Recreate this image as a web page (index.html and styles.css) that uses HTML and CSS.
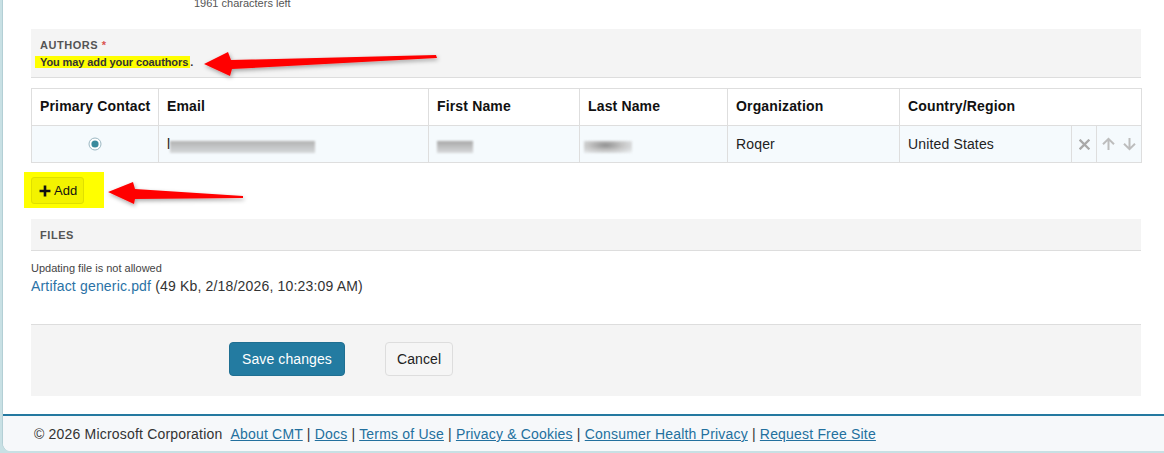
FILE: index.html
```html
<!DOCTYPE html>
<html lang="en">
<head>
<meta charset="utf-8">
<title>Edit Submission</title>
<link rel="stylesheet" href="styles.css">
</head>
<body>
<div class="page">
  <div class="content">
    <div class="chars-left">1961 characters left</div>

    <section class="authors">
      <div class="section-head">
        <div class="section-title">AUTHORS <span class="req">*</span></div>
        <div class="hint"><mark>You may add your coauthors</mark>.</div>
      </div>

      <table class="authors-table">
        <colgroup>
          <col class="c-primary"><col class="c-email"><col class="c-first"><col class="c-last">
          <col class="c-org"><col class="c-country"><col class="c-del"><col class="c-move">
        </colgroup>
        <thead>
          <tr>
            <th>Primary Contact</th>
            <th>Email</th>
            <th>First Name</th>
            <th>Last Name</th>
            <th>Organization</th>
            <th colspan="3">Country/Region</th>
          </tr>
        </thead>
        <tbody>
          <tr>
            <td class="center">
              <svg class="radio" width="14" height="14" viewBox="0 0 14 14"><circle cx="7" cy="7" r="6" fill="#fff" stroke="#9bb7c2" stroke-width="1"/><circle cx="7" cy="7" r="3.6" fill="#3a8a9c"/></svg>
            </td>
            <td><span class="peek">l</span><span class="redact redact-email"></span></td>
            <td><span class="redact redact-first"></span></td>
            <td><span class="redact redact-last"></span></td>
            <td>Roqer</td>
            <td>United States</td>
            <td class="center icon-cell">
              <svg width="11" height="11" viewBox="0 0 11 11"><path d="M1.5 1.5 L9.5 9.5 M9.5 1.5 L1.5 9.5" stroke="#a9a9a9" stroke-width="2.3" stroke-linecap="square"/></svg>
            </td>
            <td class="center icon-cell move">
              <svg width="13" height="14" viewBox="0 0 13 14"><path d="M6.5 13 V1.8 M1 7.2 L6.5 1.8 L12 7.2" fill="none" stroke="#bdbdbd" stroke-width="2"/></svg>
              <svg width="13" height="14" viewBox="0 0 13 14"><path d="M6.5 1 V12.2 M1 6.8 L6.5 12.2 L12 6.8" fill="none" stroke="#bdbdbd" stroke-width="2"/></svg>
            </td>
          </tr>
        </tbody>
      </table>

      <div class="add-highlight">
        <button class="btn-add" type="button">
          <svg width="11" height="11" viewBox="0 0 11 11"><path d="M5.5 0.5 V10.5 M0.5 5.5 H10.5" stroke="#111" stroke-width="2.4"/></svg>
          <span>Add</span>
        </button>
      </div>
    </section>

    <section class="files">
      <div class="section-head files-head">
        <div class="section-title">FILES</div>
      </div>
      <div class="files-note">Updating file is not allowed</div>
      <div class="file-line"><a class="file-link" href="#">Artifact generic.pdf</a> (49 Kb, 2/18/2026, 10:23:09 AM)</div>
    </section>

    <div class="actions">
      <button class="btn btn-primary" type="button">Save changes</button>
      <button class="btn btn-default" type="button">Cancel</button>
    </div>
  </div>

  <footer class="footer">
    <span class="copy">© 2026 Microsoft Corporation</span>
    <span class="links"><a href="#">About CMT</a> | <a href="#">Docs</a> | <a href="#">Terms of Use</a> | <a href="#">Privacy &amp; Cookies</a> | <a href="#">Consumer Health Privacy</a> | <a href="#">Request Free Site</a></span>
  </footer>
</div>

<svg class="annot" width="1164" height="453" viewBox="0 0 1164 453">
  <defs>
    <filter id="sh" x="-20%" y="-50%" width="140%" height="200%">
      <feDropShadow dx="1" dy="2" stdDeviation="2" flood-color="#000" flood-opacity="0.35"/>
    </filter>
  </defs>
  <polygon filter="url(#sh)" fill="#ff0000" points="204,64 228,52 231,60 436,55 437,58 232,69 230,76"/>
  <polygon filter="url(#sh)" fill="#ff0000" points="108,192 133,182 135,189 243,196 243,198 135,199 134,204"/>
</svg>
</body>
</html>
```

FILE: styles.css
```css
* { box-sizing: border-box; }

html, body {
  margin: 0;
  height: 100%;
}

body {
  background: #c8e0e4;
  font-family: "Liberation Sans", Arial, sans-serif;
  color: #333;
  overflow: hidden;
  position: relative;
}

.page {
  margin-left: 2px;
  border-left: 1px solid #b3cfd5;
  background: #fff;
  border-bottom-left-radius: 8px;
}

.content {
  padding: 0 23px 18px 28px;
}

.chars-left {
  margin: -3px 0 0 163px;
  font-size: 11px;
  line-height: 12px;
  color: #555;
}

.section-head {
  background: #f4f4f4;
  border-bottom: 1px solid #dddddd;
  padding: 9px 9px 8px;
}

.authors .section-head {
  margin-top: 20px;
}

.section-title {
  font-size: 11px;
  font-weight: bold;
  letter-spacing: 0.55px;
  line-height: 14px;
  color: #555;
}

.req {
  color: #d9534f;
  letter-spacing: 0;
}

.hint {
  margin-top: 3px;
  margin-left: -5px;
  font-size: 11px;
  font-weight: bold;
  letter-spacing: -0.1px;
  line-height: 14px;
  color: #333;
}

.hint mark {
  background: #ffff00;
  color: #333;
  padding: 0 2px 0 5px;
}

.authors-table {
  margin-top: 10px;
  width: 100%;
  border-collapse: collapse;
  table-layout: fixed;
  font-size: 14px;
  letter-spacing: 0.15px;
}

.c-primary { width: 127px; }
.c-email { width: 270px; }
.c-first { width: 151px; }
.c-last { width: 148px; }
.c-org { width: 172px; }
.c-country { width: 172px; }
.c-del { width: 25px; }
.c-move { width: 45px; }

.authors-table th,
.authors-table td {
  border: 1px solid #dedede;
  padding: 8px;
  line-height: 20px;
  text-align: left;
  white-space: nowrap;
}

.authors-table th {
  font-weight: bold;
  color: #111;
  background: #fff;
  padding: 7px 8px 9px;
}

.authors-table tbody td {
  background: #f5fafd;
  color: #222;
}

.authors-table td.center {
  text-align: center;
}

.authors-table td.icon-cell {
  padding: 8px 0;
}

.radio {
  vertical-align: middle;
  margin-top: -3px;
}

.icon-cell svg {
  vertical-align: middle;
  margin-top: -2px;
}

.move svg + svg {
  margin-left: 3px;
}

.peek {
  color: #111;
}

.redact {
  display: inline-block;
  height: 12px;
  vertical-align: middle;
  margin-top: 3px;
  filter: blur(0.8px);
}

.redact-email {
  width: 145px;
  margin-left: 0;
  background: linear-gradient(to bottom, #b2b2b2, #d6d9db);
}

.redact-first {
  width: 36px;
  background: linear-gradient(to bottom, #a8a8a8, #d8dadc);
}

.redact-last {
  width: 48px;
  margin-left: -4px;
  background: radial-gradient(ellipse at 45% 35%, #8f8f8f 0%, #c4c4c4 45%, rgba(230,232,234,0.3) 100%);
}

.add-highlight {
  margin: 9px 0 0 -7px;
  width: 80px;
  height: 36px;
  background: #ffff00;
  padding: 5px 0 0 7px;
}

.btn-add {
  display: flex;
  align-items: center;
  gap: 3px;
  height: 27px;
  width: 53px;
  padding: 0 0 0 7px;
  background: #f3f300;
  border: 1px solid #e0e000;
  border-radius: 3px;
  font-family: inherit;
  font-size: 13px;
  color: #111;
}

.btn-add svg {
  width: 12px;
  height: 12px;
}

.files-head {
  margin-top: 11px;
  padding: 9px 9px 8px;
}

.files-note {
  margin-top: 10px;
  font-size: 11px;
  line-height: 14px;
  color: #444;
}

.file-line {
  margin-top: 1px;
  font-size: 14px;
  line-height: 20px;
  letter-spacing: 0.17px;
  color: #333;
}

.file-link {
  color: #2a72a6;
  text-decoration: none;
}

.actions {
  margin-top: 28px;
  background: #f4f4f4;
  border-top: 1px solid #dddddd;
  padding: 17px 0 20px 198px;
  display: flex;
  gap: 40px;
}

.btn {
  height: 34px;
  padding: 0 12px;
  border-radius: 4px;
  font-family: inherit;
  font-size: 14px;
  letter-spacing: 0.1px;
  border: 1px solid transparent;
}

.btn-primary {
  background: #237ba1;
  border-color: #1f6f92;
  color: #fff;
  padding: 0 12px;
}

.btn-default {
  background: #f5f5f5;
  border-color: #dddddd;
  color: #222;
  padding: 0 11px;
}

.footer {
  border-top: 2px solid #2479a0;
  background: #f6f8fa;
  padding: 8px 0 7px 31px;
  font-size: 14px;
  line-height: 20px;
  letter-spacing: 0.19px;
  color: #333;
  border-bottom-left-radius: 8px;
}

.links {
  margin-left: 4px;
}

.links a {
  color: #23709e;
  text-decoration: underline;
}

.annot {
  position: absolute;
  top: 0;
  left: 0;
  pointer-events: none;
}
```
